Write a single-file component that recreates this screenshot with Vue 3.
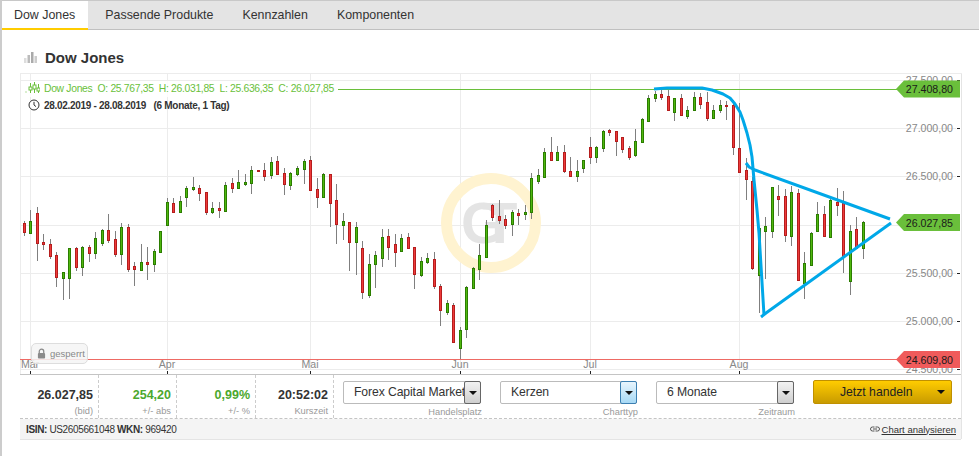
<script setup>
const tabs = ['Dow Jones', 'Passende Produkte', 'Kennzahlen', 'Komponenten'];

// x, wick top, wick bottom, body top, body bottom, rising
const candles = [
  [24,221,236,223,232,0],[30,210,234,221,233,1],[37,207,261,213,243,0],[43,234,250,242,244,0],[50,239,259,244,256,0],
  [56,252,287,255,277,0],[63,272,300,272,278,1],[69,248,299,248,278,1],[76,247,271,248,267,0],[82,246,276,247,267,1],
  [89,245,262,247,253,0],[95,232,259,238,253,1],[102,229,246,230,243,1],[108,214,243,230,240,0],[115,231,257,239,254,0],
  [121,223,265,227,254,1],[128,224,272,227,269,0],[134,262,286,266,269,0],[141,244,270,262,270,1],[147,247,280,262,264,0],
  [154,249,272,251,264,1],[160,231,252,231,252,1],[167,198,225,202,225,1],[173,198,213,203,212,0],[180,196,212,201,212,1],
  [186,186,207,188,197,1],[193,177,191,187,189,1],[199,185,201,188,193,0],[206,192,215,192,212,0],[212,202,214,208,212,1],
  [219,202,218,208,210,0],[225,182,211,185,211,1],[232,178,193,183,188,0],[238,170,188,182,188,1],[245,174,186,182,184,1],
  [251,166,194,170,183,1],[258,170,171,170,171,0],[264,163,181,170,176,0],[271,157,179,162,175,1],[277,156,174,161,174,0],
  [284,168,195,173,184,0],[290,172,190,173,185,1],[297,166,176,168,174,1],[304,159,184,161,169,1],[310,156,190,160,190,0],
  [317,178,208,189,197,0],[323,173,198,174,197,1],[330,174,227,174,203,0],[336,184,244,200,224,0],[343,213,240,221,225,1],
  [349,222,271,222,242,0],[356,222,275,227,242,1],[362,241,299,248,292,0],[369,254,298,264,295,1],[375,251,288,255,264,1],
  [382,229,267,237,258,1],[388,229,260,236,247,0],[395,234,267,244,252,0],[401,234,252,238,251,1],[408,233,249,237,248,0],
  [414,247,289,247,274,0],[421,257,277,261,275,1],[427,253,264,258,262,1],[434,252,289,259,286,0],[440,284,326,286,310,0],
  [447,300,315,303,312,1],[453,303,342,305,342,0],[460,327,359,330,348,1],[466,286,338,287,329,1],[473,267,289,268,288,1],
  [479,244,280,255,269,1],[486,220,257,225,257,1],[492,204,221,205,217,0],[499,200,224,216,220,0],[505,215,229,219,225,0],
  [512,210,236,212,224,1],[518,209,225,213,215,0],[525,205,220,212,214,1],[531,173,219,178,212,1],[538,169,184,175,181,1],
  [544,148,177,152,177,1],[551,137,160,152,160,0],[557,146,160,152,160,1],[564,145,173,152,171,0],[570,157,176,171,176,0],
  [577,160,182,171,176,1],[583,160,173,160,168,1],[590,137,164,147,157,0],[596,146,163,147,157,1],[603,130,152,131,148,1],
  [609,129,136,130,132,0],[616,131,156,131,141,0],[622,137,153,137,149,0],[629,146,160,148,157,0],[635,129,157,141,155,1],
  [642,118,142,119,142,1],[648,95,121,98,121,1],[655,91,102,94,98,1],[661,88,100,94,97,0],[668,90,110,96,110,0],
  [674,98,121,98,112,1],[681,94,115,98,115,0],[687,106,119,110,116,1],[694,92,111,97,110,1],[700,93,109,97,104,0],
  [707,92,121,102,118,0],[713,105,118,110,118,1],[720,100,113,105,110,1],[726,101,120,105,106,0],[733,100,155,105,147,0],
  [739,103,172,148,172,0],[746,158,200,170,179,0],[752,177,270,181,268,0],[759,228,313,228,275,1],[765,217,279,226,231,1],
  [772,187,238,187,231,1],[778,185,216,196,199,0],[785,189,242,196,235,0],[791,186,246,192,236,1],[798,189,280,193,280,0],
  [804,252,299,263,283,1],[811,232,266,233,265,1],[817,202,231,214,231,1],[824,206,236,214,236,0],[830,199,237,200,237,1],
  [837,188,216,202,205,0],[843,191,273,203,256,0],[850,225,295,231,281,1],[856,217,248,229,248,0],[863,221,259,222,248,1],
];

const hLines = [
  { y: 80, label: '27.500,00' },
  { y: 128, label: '27.000,00' },
  { y: 176, label: '26.500,00' },
  { y: 225, label: '26.000,00', hidden: true },
  { y: 273, label: '25.500,00' },
  { y: 321, label: '25.000,00' },
  { y: 369, label: '24.500,00' },
];

const months = [
  { x: 30, label: 'Mär' },
  { x: 167, label: 'Apr' },
  { x: 310, label: 'Mai' },
  { x: 460, label: 'Jun' },
  { x: 590, label: 'Jul' },
  { x: 739, label: 'Aug' },
];

const priceTags = [
  { y: 89, label: '27.408,80', kind: 'high' },
  { y: 222.5, label: '26.027,85', kind: 'high' },
  { y: 359.5, label: '24.609,80', kind: 'low' },
];

const stats = [
  { value: '26.027,85', label: '(bid)', width: 79 },
  { value: '254,20', label: '+/- abs', width: 78, up: true },
  { value: '0,99%', label: '+/- %', width: 79, up: true },
  { value: '20:52:02', label: 'Kurszeit', width: 78 },
];

const selects = [
  { value: 'Forex Capital Markets', label: 'Handelsplatz', width: 139 },
  { value: 'Kerzen', label: 'Charttyp', width: 138, active: true },
  { value: '6 Monate', label: 'Zeitraum', width: 139 },
];

const tagPoints = (y) =>
  `896,${y} 904,${y - 8.5} 960,${y - 8.5} 960,${y + 8.5} 904,${y + 8.5}`;
</script>

<template>
  <div class="page">
    <div class="tabs">
      <div v-for="(tab, i) in tabs" :key="tab" class="tab" :class="{ active: i === 0 }">{{ tab }}</div>
    </div>

    <div class="content">
      <div class="heading">
        <svg class="heading-icon" width="14" height="12" viewBox="0 0 14 12">
          <rect x="0" y="7" width="2.5" height="5" fill="#ddd" />
          <rect x="3.5" y="4" width="2.5" height="8" fill="#bbb" />
          <rect x="7" y="1" width="2.5" height="11" fill="#aaa" />
          <rect x="10.5" y="5" width="2.5" height="7" fill="#ccc" />
        </svg>
        <h1>Dow Jones</h1>
      </div>

      <div class="box">
        <div class="chart">
          <svg class="plot" width="942" height="301" viewBox="20 73 942 301">
            <g class="grid">
              <line v-for="l in hLines" :key="l.y" x1="20" x2="956" :y1="l.y + 0.5" :y2="l.y + 0.5" />
              <line v-for="m in months" :key="m.x" :x1="m.x + 0.5" :x2="m.x + 0.5" y1="73" y2="369" />
              <line x1="20" x2="962" y1="73.5" y2="73.5" />
              <line x1="20.5" x2="20.5" y1="73" y2="374" />
            </g>

            <circle cx="491" cy="223" r="44.5" fill="none" stroke="#fff3d0" stroke-width="11" />
            <text class="mark" x="461" y="243">GT</text>

            <g v-for="c in candles" :key="c[0]">
              <line class="wick" :x1="c[0] + 0.5" :x2="c[0] + 0.5" :y1="c[1]" :y2="c[2]" />
              <rect
                :class="c[5] ? 'up' : 'down'"
                :x="c[0] - 0.5"
                :y="c[3] + 0.5"
                width="2"
                :height="c[4] - c[3]"
              />
            </g>

            <line class="level high" x1="338" x2="900" y1="89.5" y2="89.5" />
            <line class="level low" x1="20" x2="900" y1="359.5" y2="359.5" />

            <polyline
              class="drawn"
              points="654,89 667,88 702,88 712,90 723,94 730,98 735,104 740,112 743,120 747,133 750,145 752,157 754,180 757,210 759,233 764,315"
            />
            <polyline class="drawn" points="746,163 749,167 755,170 890,219" />
            <polyline class="drawn" points="761,317 766,313 891,223" />

            <g v-for="l in hLines" :key="'axis' + l.y">
              <text v-if="!l.hidden" class="axis" x="953" :y="l.y + 4">{{ l.label }}</text>
              <line class="tick" x1="957" x2="960" :y1="l.y + 0.5" :y2="l.y + 0.5" />
            </g>

            <g v-for="m in months" :key="'month' + m.x">
              <text class="month" :x="m.x" y="368">{{ m.label }}</text>
              <line class="tick" :x1="m.x + 0.5" :x2="m.x + 0.5" y1="371" y2="374" />
            </g>

            <g v-for="t in priceTags" :key="t.label">
              <polygon :class="t.kind" class="tag" :points="tagPoints(t.y)" />
              <text class="tag-text" x="953" :y="t.y + 4">{{ t.label }}</text>
            </g>
          </svg>

          <div class="legend">
            <div class="legend-row quote">
              <svg width="15" height="12" viewBox="0 0 15 12" class="legend-icon">
                <g fill="none" stroke="#6abf3b" stroke-width="1">
                  <path d="M1 9.5v1M5.5 1v10M9.5 0v11M13.5 2v9" />
                  <rect x="4" y="5" width="3" height="3" fill="#fff" />
                  <rect x="8" y="3" width="3" height="4" fill="#fff" />
                  <rect x="12" y="6" width="3" height="3" fill="#fff" />
                </g>
              </svg>
              <span>Dow Jones&nbsp; O: 25.767,35&nbsp; H: 26.031,85&nbsp; L: 25.636,35&nbsp; C: 26.027,85</span>
            </div>
            <div class="legend-row range">
              <svg width="12" height="12" viewBox="0 0 12 12" class="legend-icon clock">
                <circle cx="6" cy="6" r="5" fill="#fff" stroke="#333" stroke-width="1" />
                <path d="M6 2.8V6l2 1.6" fill="none" stroke="#333" stroke-width="1" />
              </svg>
              <span>28.02.2019 - 28.08.2019&nbsp;&nbsp; (6 Monate, 1 Tag)</span>
            </div>
          </div>

          <div class="locked">
            <svg width="9" height="11" viewBox="0 0 10 11">
              <path d="M2.5 5V3.2a2.5 2.5 0 0 1 5 0V5" fill="none" stroke="#8a8a8a" stroke-width="1.4" />
              <rect x="1" y="5" width="8" height="6" rx="1" fill="#8a8a8a" />
            </svg>
            <span>gesperrt</span>
          </div>
        </div>

        <div class="controls">
          <div
            v-for="s in stats"
            :key="s.label"
            class="stat"
            :style="{ width: s.width + 'px' }"
          >
            <strong :class="{ up: s.up }">{{ s.value }}</strong>
            <small>{{ s.label }}</small>
          </div>

          <div class="selects">
            <div
              v-for="s in selects"
              :key="s.label"
              class="field"
              :style="{ width: s.width + 'px' }"
            >
              <div class="select" :class="{ active: s.active }">
                <span class="select-value">{{ s.value }}</span>
                <span class="select-btn"><i class="caret"></i></span>
              </div>
              <small>{{ s.label }}</small>
            </div>
            <button class="trade" type="button">
              <span>Jetzt handeln</span>
              <i class="caret"></i>
            </button>
          </div>
        </div>

        <div class="footer">
          <div class="codes"><b>ISIN:</b> US2605661048 <b>WKN:</b> 969420</div>
          <div class="analyse">
            <svg width="10" height="6" viewBox="0 0 10 6">
              <path d="M4.5 1H2.5a2 2 0 0 0 0 4h2M5.5 1h2a2 2 0 0 1 0 4h-2M3 3h4" fill="none" stroke="#555" stroke-width="1" />
            </svg>
            <a href="#">Chart analysieren</a>
          </div>
        </div>
      </div>
    </div>
  </div>
</template>

<style>
html,
body {
  margin: 0;
  background: #fff;
}
</style>

<style scoped>
.page {
  width: 979px;
  height: 456px;
  box-sizing: border-box;
  border-left: 2px solid #ccc;
  overflow: hidden;
  font-family: "Liberation Sans", Arial, sans-serif;
  color: #333;
}

.tabs {
  display: flex;
  height: 30px;
  box-sizing: border-box;
  margin-left: -2px;
  padding-left: 2px;
  background: #e4e4e4;
  border-top: 1px solid #c8c8c8;
  border-bottom: 1px solid #c0c0c0;
}

.tab {
  padding: 0 15px;
  margin-right: -1px;
  font-size: 12.4px;
  line-height: 28px;
  color: #333;
}

.tab.active {
  height: 29px;
  box-sizing: border-box;
  padding: 0 13px 0 12px;
  margin-right: 2px;
  background: #fff;
  border-bottom: 2px solid #ffcc00;
}

.content {
  padding: 0 0 0 18px;
}

.heading {
  display: flex;
  align-items: center;
  box-sizing: border-box;
  height: 43px;
  padding-top: 11px;
  gap: 7px;
}

.heading-icon {
  margin-left: 4px;
}

.heading h1 {
  margin: 0;
  font-size: 15px;
  font-weight: bold;
  color: #333;
}

.box {
  width: 942px;
  height: 366px;
  box-sizing: border-box;
  border-right: 1px solid #e4e4e4;
}

.chart {
  position: relative;
  width: 942px;
  height: 301px;
}

.plot {
  display: block;
}

.grid line {
  stroke: #ececec;
  stroke-width: 1;
}

.mark {
  font-size: 58px;
  font-weight: bold;
  letter-spacing: -24px;
  fill: #e4e4e4;
}

.wick {
  stroke: #7f7f7f;
  stroke-width: 1;
}

.up {
  fill: #4fb80f;
  stroke: #2b7d00;
  stroke-width: 1;
}

.down {
  fill: #ee3a3a;
  stroke: #b51d1d;
  stroke-width: 1;
}

.level {
  stroke-width: 1;
}

.level.high {
  stroke: #6abf3b;
}

.level.low {
  stroke: #ee6a64;
}

.drawn {
  fill: none;
  stroke: #00a8e8;
  stroke-width: 3;
  stroke-linejoin: round;
}

.axis,
.tag-text {
  font-size: 10.6px;
  text-anchor: end;
}

.axis {
  fill: #888;
}

.tag-text {
  fill: #1a1a1a;
}

.tick {
  stroke: #222;
  stroke-width: 1;
}

.month {
  font-size: 10.6px;
  text-anchor: middle;
  fill: #888;
}

.tag.high {
  fill: #6abf3b;
  stroke: none;
}

.tag.low {
  fill: #f05b5b;
  stroke: none;
}

.legend {
  position: absolute;
  left: 2px;
  top: 8px;
}

.legend-row {
  display: flex;
  align-items: center;
  box-sizing: border-box;
  height: 16px;
  gap: 4px;
  white-space: nowrap;
}

.legend-icon {
  flex: none;
}

.quote {
  width: 316px;
  padding: 0 0 2px 3px;
  background: rgba(255, 255, 255, 0.85);
  font-size: 10.4px;
  letter-spacing: -0.33px;
  color: #6abf3b;
}

.range {
  padding-left: 6px;
  font-size: 10px;
  font-weight: bold;
  letter-spacing: -0.3px;
  color: #333;
}

.locked {
  position: absolute;
  left: 11px;
  top: 270px;
  display: flex;
  align-items: center;
  gap: 4px;
  height: 21px;
  box-sizing: border-box;
  padding: 0 2px 0 5px;
  border: 1px solid #ddd;
  border-radius: 5px;
  background: rgba(245, 245, 245, 0.85);
  font-size: 9.5px;
  color: #888;
}

.controls {
  display: flex;
  height: 45px;
  box-sizing: border-box;
  border-top: 1px solid #c4c4c4;
  border-bottom: 1px dashed #c4c4c4;
}

.stat {
  display: flex;
  flex-direction: column;
  align-items: flex-end;
  box-sizing: border-box;
  padding: 13px 5px 0 0;
  border-right: 1px dashed #ccc;
}

.stat strong {
  font-size: 12.5px;
  line-height: 15px;
  color: #333;
}

.stat strong.up {
  color: #4ca82e;
}

.stat small,
.field small {
  display: block;
  font-size: 9.3px;
  line-height: 12px;
  color: #999;
  text-align: right;
}

.stat small {
  margin-top: 2px;
}

.selects {
  display: flex;
  gap: 18px;
  padding: 6px 0 0 9px;
}

.field small {
  margin-top: 2px;
}

.select {
  display: flex;
  width: calc(100% - 1px);
  height: 23px;
  box-sizing: border-box;
  border: 1px solid #bbb;
  border-radius: 2px;
  background: #fff;
}

.select-value {
  flex: 1;
  overflow: hidden;
  padding-left: 10px;
  font-size: 12.2px;
  letter-spacing: -0.1px;
  line-height: 21px;
  white-space: nowrap;
  color: #333;
}

.select-btn {
  display: flex;
  align-items: center;
  justify-content: center;
  flex: none;
  width: 17px;
  height: 23px;
  box-sizing: border-box;
  margin: -1px -1px 0 0;
  border: 1px solid #666;
  border-radius: 2px;
  background: linear-gradient(#f2f2f2, #cfcfcf);
}

.select.active .select-btn {
  border-color: #3c7fb1;
  background: linear-gradient(#e8f5fd, #a7d9f5);
}

.caret {
  display: block;
  width: 0;
  height: 0;
  border-left: 4px solid transparent;
  border-right: 4px solid transparent;
  border-top: 4px solid #111;
}

.trade {
  display: flex;
  align-items: center;
  justify-content: space-between;
  width: 139px;
  height: 24px;
  box-sizing: border-box;
  margin-top: -1px;
  padding: 0 6px 0 26px;
  border: 1px solid #c09000;
  border-radius: 2px;
  background: linear-gradient(#ffcc00, #c89b00);
  font-family: inherit;
  font-size: 12.2px;
  color: #222;
}

.footer {
  display: flex;
  align-items: center;
  justify-content: space-between;
  height: 20px;
  padding: 0 5px 0 6px;
  background: #f4f4f4;
  border-bottom: 1px solid #e4e4e4;
  font-size: 10px;
}

.codes {
  letter-spacing: -0.36px;
}

.analyse {
  display: flex;
  align-items: center;
  gap: 2px;
}

.analyse a {
  color: #333;
  font-size: 9.5px;
}
</style>
